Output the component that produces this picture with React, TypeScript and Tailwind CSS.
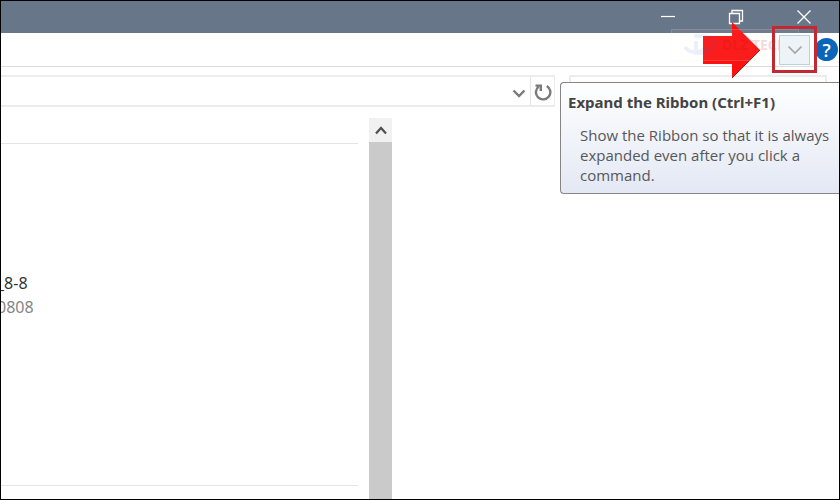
import { ReactNode } from "react";

interface IconButtonProps {
  label: string;
  className?: string;
  children: ReactNode;
}

const IconButton = ({ label, className = "", children }: IconButtonProps) => (
  <button type="button" aria-label={label} className={`flex items-center justify-center ${className}`}>
    {children}
  </button>
);

const TitleBar = () => (
  <div className="flex h-8 justify-end bg-[#687689] pr-px text-white">
    <IconButton label="Minimize" className="w-17">
      <svg width="14" height="16" fill="none" stroke="currentColor" strokeWidth="1.2">
        <path d="M0 7.5H14" />
      </svg>
    </IconButton>
    <IconButton label="Restore" className="w-17">
      <svg width="16" height="16" fill="none" stroke="currentColor" strokeWidth="1.3">
        <path d="M1.5 4.5H11.5V14.5H1.5zM4 4V1.5H14.5V12H12" />
      </svg>
    </IconButton>
    <IconButton label="Close" className="w-17">
      <svg width="16" height="16" fill="none" stroke="currentColor" strokeWidth="1.3">
        <path d="M1.5 1.5L14.5 14.5M14.5 1.5L1.5 14.5" />
      </svg>
    </IconButton>
  </div>
);

const Watermark = () => (
  <div className="absolute -top-1 right-10 z-10 flex h-8 w-32 items-center gap-1 border border-orange-100/15 bg-orange-50/5 pl-3">
    <svg width="34" height="26" fill="none" className="shrink-0 opacity-10">
      <path d="M10 4H20Q31 4 30 12T18 21H12V9M1 15Q8 25 24 15" stroke="#4668cc" strokeWidth="3.5" />
    </svg>
    <span className="text-sm leading-none font-bold whitespace-nowrap text-[#b00000]/15">DLZ TECH</span>
  </div>
);

const RibbonStrip = () => (
  <div className="relative z-20 flex h-[34px] items-center justify-end border-b border-[#dcdcdc]">
    <svg width="59" height="58" className="absolute -top-3 right-[78px]">
      <path d="M1 15H30V1L58 29L30 57V43H1z" fill="#fb1111" />
      <path d="M30 57L58 29" stroke="#c60d16" strokeWidth="1" />
    </svg>
    <Watermark />
    <div className="absolute -top-[7px] right-[22px] z-20 flex h-[47px] w-[45px] items-center justify-center border-3 border-[#c22a33]">
      <IconButton label="Expand the Ribbon" className="h-[30px] w-[31px] border border-[#b9d0df] bg-[#eef3f7] text-[#a5a5a5]">
        <svg width="16" height="10" fill="none" stroke="currentColor" strokeWidth="1.7">
          <path d="M1.5 1.5L8 8L14.5 1.5" />
        </svg>
      </IconButton>
    </div>
    <IconButton label="Help" className="mr-px size-[23px] rounded-full bg-[#0b65b8] text-white">
      <span className="font-['Open_Sans',sans-serif] text-lg leading-none font-semibold">?</span>
    </IconButton>
  </div>
);

const Tooltip = () => (
  <div
    role="tooltip"
    className="absolute top-[15px] right-0 z-10 w-[279px] rounded-l-sm border border-r-0 border-[#858585] bg-linear-to-b from-white to-[#e3e8f4] pt-[7px] pb-2 pl-[7px] text-[#575757]"
  >
    <h2 className="text-[15px] leading-6 font-bold text-[#444]">Expand the Ribbon (Ctrl+F1)</h2>
    <p className="mt-[11px] pl-3 font-['Open_Sans',sans-serif] text-[15px] leading-5">
      Show the Ribbon so that it is always
      <br />
      expanded even after you click a
      <br />
      command.
    </p>
  </div>
);

const AddressBar = () => (
  <div className="relative flex h-10 items-start pt-2">
    <div className="flex h-8 flex-1 border-y-2 border-r border-[#ececec] text-[#7a7a7a]">
      <input aria-label="Address" className="min-w-0 flex-1 outline-none" />
      <IconButton label="Previous locations" className="w-[22px]">
        <svg width="14" height="9" className="mt-1" fill="none" stroke="currentColor" strokeWidth="2.4">
          <path d="M1.5 1.5L7 7L12.5 1.5" />
        </svg>
      </IconButton>
      <IconButton label="Refresh" className="w-6 border-l border-[#e4e4e4]">
        <svg width="18" height="20" className="mt-1" fill="none" stroke="currentColor" strokeWidth="2.4">
          <path d="M12.8 3A7.2 7.2 0 1 1 4.6 3.6M1.5 2.6H6.8V8" />
        </svg>
      </IconButton>
    </div>
    <input aria-label="Search" className="mr-3 ml-3.5 h-8 w-[258px] border-2 border-[#ececec] outline-none" />
    <Tooltip />
  </div>
);

const FileList = () => (
  <main className="flex flex-1 pt-[11px]">
    <div className="flex w-[357px] flex-col">
      <div className="mt-[25px] border-t border-[#e4e4e4]" />
      <div className="mt-[127px] flex-1 overflow-hidden text-base leading-6">
        <p className="-ml-1 text-[#333]">_8-8</p>
        <p className="-ml-1 text-[#858585]">0808</p>
      </div>
      <div className="mb-[13px] border-t border-[#e4e4e4]" />
    </div>
    <div className="ml-[11px] flex w-[23px] flex-col bg-[#cacaca]">
      <IconButton label="Scroll up" className="h-6 bg-[#f1f1f1] text-[#4f4f4f]">
        <svg width="12" height="9" fill="none" stroke="currentColor" strokeWidth="2.2">
          <path d="M1 7.5L6 2L11 7.5" />
        </svg>
      </IconButton>
    </div>
  </main>
);

export default function App() {
  return (
    <div className="flex min-h-screen flex-col overflow-hidden border border-black bg-white font-['Noto_Sans',sans-serif]">
      <TitleBar />
      <RibbonStrip />
      <AddressBar />
      <FileList />
    </div>
  );
}
